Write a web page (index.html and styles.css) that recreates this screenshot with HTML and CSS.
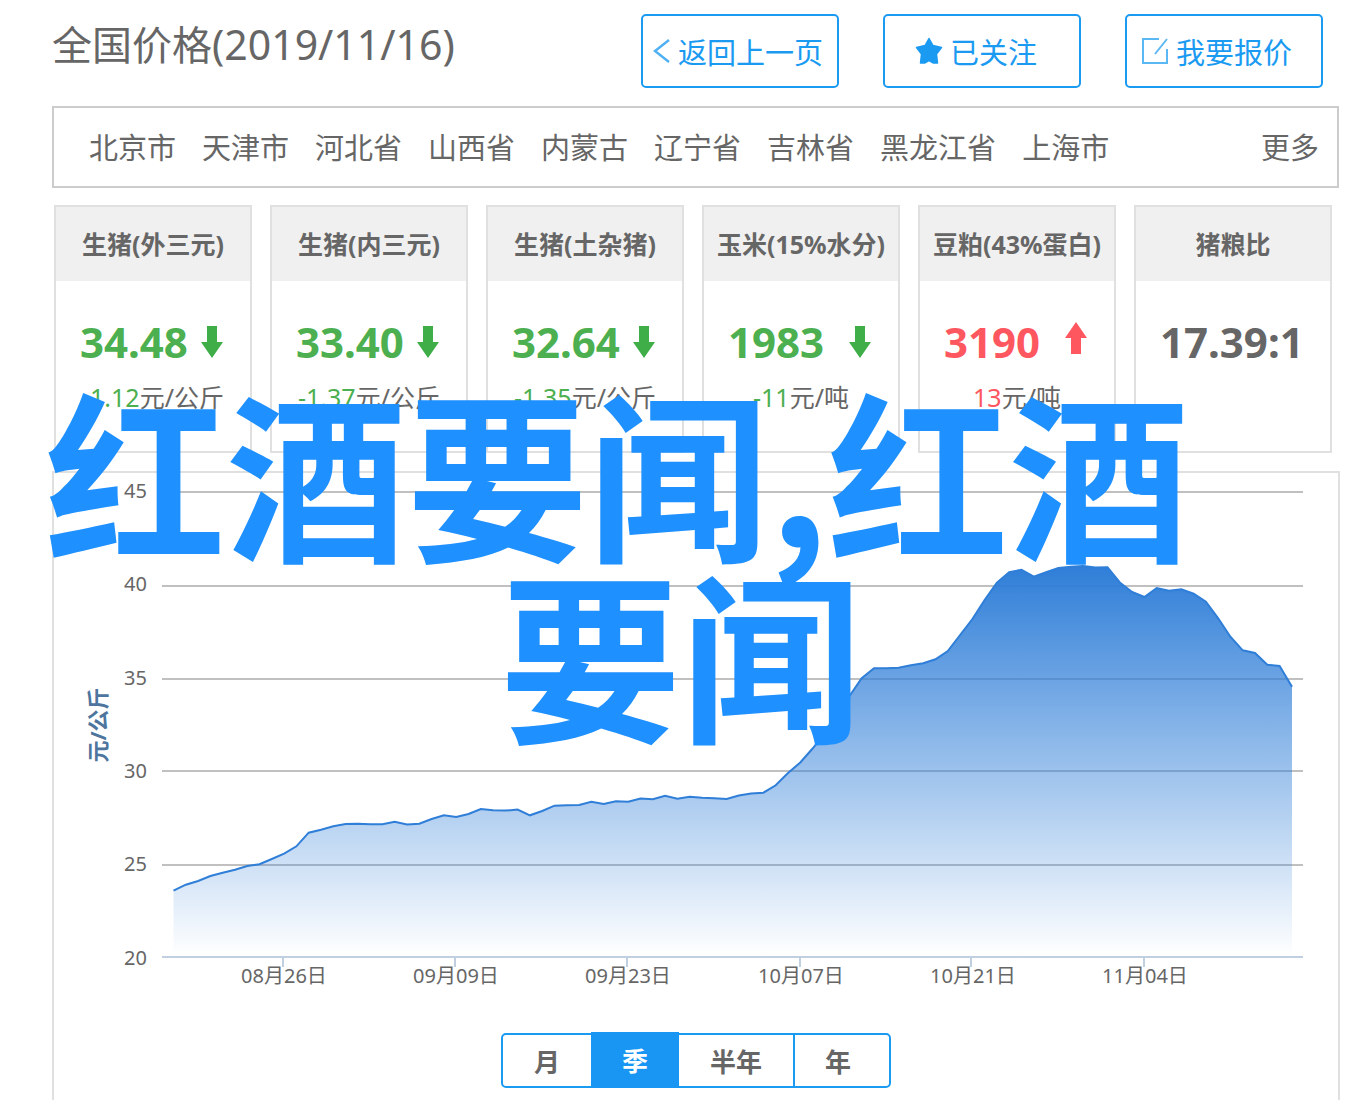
FILE: index.html
```html
<!DOCTYPE html>
<html lang="zh-CN">
<head>
<meta charset="utf-8">
<meta name="viewport" content="width=device-width, initial-scale=1">
<title>全国价格</title>
<link rel="stylesheet" href="styles.css">
</head>
<body>
<main class="page">
  <header class="topbar">
    <h1 class="topbar-title">全国价格<span class="topbar-date">(2019/11/16)</span></h1>
    <div class="actions">
      <button class="action action-back" type="button">
        <svg width="18" height="26" viewBox="0 0 18 26" aria-hidden="true"><path d="M16 2 2 13l14 11" fill="none" stroke="#4fb0f3" stroke-width="2.4"/></svg>
        返回上一页
      </button>
      <button class="action action-follow" type="button">
        <svg width="28" height="28" viewBox="0 0 28 28" aria-hidden="true"><path d="M14 1.500 18 8.500 26.500 10.500 21.500 17 22.500 26H18.500L14 23.500 9.500 26H5.500L6.500 17 1.500 10.500 10 8.500Z" fill="#1b9af2" stroke="#1b9af2" stroke-width="1.500" stroke-linejoin="round"/></svg>
        已关注
      </button>
      <button class="action action-quote" type="button">
        <svg width="28" height="28" viewBox="0 0 28 28" aria-hidden="true"><path d="M18 2H2v24h24V12M26 2 14 17" fill="none" stroke="#5cb7f5" stroke-width="2"/></svg>
        我要报价
      </button>
    </div>
  </header>

  <nav class="regions" aria-label="地区">
    <a href="#">北京市</a>
    <a href="#">天津市</a>
    <a href="#">河北省</a>
    <a href="#">山西省</a>
    <a href="#">内蒙古</a>
    <a href="#">辽宁省</a>
    <a href="#">吉林省</a>
    <a href="#">黑龙江省</a>
    <a href="#">上海市</a>
    <a class="regions-more" href="#">更多</a>
  </nav>

  <section class="cards">
    <article class="card down">
      <h2 class="card-title">生猪(外三元)</h2>
      <div class="card-price"><strong>34.48</strong><svg width="22" height="30" viewBox="0 0 22 30" aria-hidden="true"><path d="M6 0h10v16h6L11 32 0 16h6Z" fill="#3fae49"/></svg></div>
      <p class="card-change"><span>-1.12</span>元/公斤</p>
    </article>
    <article class="card down">
      <h2 class="card-title">生猪(内三元)</h2>
      <div class="card-price"><strong>33.40</strong><svg width="22" height="30" viewBox="0 0 22 30" aria-hidden="true"><path d="M6 0h10v16h6L11 32 0 16h6Z" fill="#3fae49"/></svg></div>
      <p class="card-change"><span>-1.37</span>元/公斤</p>
    </article>
    <article class="card down">
      <h2 class="card-title">生猪(土杂猪)</h2>
      <div class="card-price"><strong>32.64</strong><svg width="22" height="30" viewBox="0 0 22 30" aria-hidden="true"><path d="M6 0h10v16h6L11 32 0 16h6Z" fill="#3fae49"/></svg></div>
      <p class="card-change"><span>-1.35</span>元/公斤</p>
    </article>
    <article class="card down">
      <h2 class="card-title">玉米(15%水分)</h2>
      <div class="card-price"><strong>1983</strong><svg width="22" height="30" viewBox="0 0 22 30" aria-hidden="true"><path d="M6 0h10v16h6L11 32 0 16h6Z" fill="#3fae49"/></svg></div>
      <p class="card-change"><span>-11</span>元/吨</p>
    </article>
    <article class="card up">
      <h2 class="card-title">豆粕(43%蛋白)</h2>
      <div class="card-price"><strong>3190</strong><svg width="22" height="38" viewBox="0 0 22 38" aria-hidden="true"><path d="M11 0 22 16h-6v16H6V16H0Z" fill="#ff575f"/></svg></div>
      <p class="card-change"><span>13</span>元/吨</p>
    </article>
    <article class="card">
      <h2 class="card-title">猪粮比</h2>
      <div class="card-price"><strong>17.39:1</strong></div>
    </article>
  </section>

  <section class="panel">
    <svg class="chart" viewBox="54 473 1284 540" role="img" aria-label="价格走势">
      <defs>
        <linearGradient id="area" gradientUnits="userSpaceOnUse" x1="0" y1="566" x2="0" y2="956">
          <stop offset="0" stop-color="#2f7ed8"/>
          <stop offset="1" stop-color="#2f7ed8" stop-opacity="0"/>
        </linearGradient>
      </defs>
      <path class="grid" d="M162 492H1303M162 586H1303M162 679H1303M162 771H1303M162 865H1303"/>
      <path fill="url(#area)" d="M173.5 956V890.700L185.800 884.700 198.100 881 210.400 876 222.700 872.700 235 869.700 247.200 866 259.500 864.200 271.800 859 284.100 853.700 296.400 846.300 308.700 832.700 321 829.700 333.300 826.300 345.600 824 357.900 823.700 370.100 824.300 382.400 824.200 394.700 821.700 407 824.500 419.300 823.800 431.600 819 443.900 815.300 456.200 817 468.500 814 480.800 809 493 810.200 505.300 810.600 517.600 809.600 529.900 815.300 542.200 811 554.500 805.700 566.800 805.200 579.100 805 591.400 801.700 603.700 804 615.900 801.300 628.200 801.700 640.500 798.500 652.800 799.300 665.100 795.700 677.400 798.700 689.700 796.700 702 797.700 714.300 798.200 726.600 799 738.800 795.500 751.100 793.500 763.400 792.700 775.700 785.300 788 773 800.300 762.500 812.600 748.500 824.900 733 837.200 716 849.500 696 861.700 678.300 874 668.300 886.300 668.300 898.600 667.700 910.900 665.300 923.200 663.200 935.500 659.300 947.800 651 960.100 635 972.400 619 984.600 600 996.900 582.700 1009.200 572.300 1021.500 569.700 1033.800 576.700 1046.100 572.300 1058.400 568 1070.700 566.700 1083 566 1095.300 567.500 1107.500 567.300 1119.800 582.500 1132.100 592 1144.400 597 1156.700 588 1169 590.700 1181.300 589.300 1193.600 593.700 1205.900 601.700 1218.200 618.300 1230.400 636.700 1242.700 650.300 1255 653 1267.300 664.700 1279.600 666 1292 686.700V956Z"/>
      <path class="line" d="M173.5 890.700L185.800 884.700 198.100 881 210.400 876 222.700 872.700 235 869.700 247.200 866 259.500 864.200 271.800 859 284.100 853.700 296.400 846.300 308.700 832.700 321 829.700 333.300 826.300 345.600 824 357.900 823.700 370.100 824.300 382.400 824.200 394.700 821.700 407 824.500 419.300 823.800 431.600 819 443.900 815.300 456.200 817 468.500 814 480.800 809 493 810.200 505.300 810.600 517.600 809.600 529.900 815.300 542.200 811 554.500 805.700 566.800 805.200 579.100 805 591.400 801.700 603.700 804 615.900 801.300 628.200 801.700 640.500 798.500 652.800 799.300 665.100 795.700 677.400 798.700 689.700 796.700 702 797.700 714.300 798.200 726.600 799 738.800 795.500 751.100 793.500 763.400 792.700 775.700 785.300 788 773 800.300 762.500 812.600 748.500 824.900 733 837.200 716 849.500 696 861.700 678.300 874 668.300 886.300 668.300 898.600 667.700 910.900 665.300 923.200 663.200 935.500 659.300 947.800 651 960.100 635 972.400 619 984.600 600 996.900 582.700 1009.200 572.300 1021.500 569.700 1033.800 576.700 1046.100 572.300 1058.400 568 1070.700 566.700 1083 566 1095.300 567.500 1107.500 567.300 1119.800 582.500 1132.100 592 1144.400 597 1156.700 588 1169 590.700 1181.300 589.300 1193.600 593.700 1205.900 601.700 1218.200 618.300 1230.400 636.700 1242.700 650.300 1255 653 1267.300 664.700 1279.600 666 1292 686.700"/>
      <path class="axis" d="M162 957H1303M283 957V967M455 957V967M627 957V967M800 957V967M971 957V967M1144 957V967"/>
      <g class="tick tick-y">
        <text x="147" y="498">45</text>
        <text x="147" y="591">40</text>
        <text x="147" y="685">35</text>
        <text x="147" y="778">30</text>
        <text x="147" y="871">25</text>
        <text x="147" y="965">20</text>
      </g>
      <g class="tick tick-x">
        <text x="284" y="983">08月26日</text>
        <text x="456" y="983">09月09日</text>
        <text x="628" y="983">09月23日</text>
        <text x="801" y="983">10月07日</text>
        <text x="973" y="983">10月21日</text>
        <text x="1145" y="983">11月04日</text>
      </g>
      <text class="axis-title" transform="translate(106 725) rotate(-90)">元/公斤</text>
    </svg>
    <div class="periods">
      <button type="button" class="period">月</button>
      <button type="button" class="period period-active" aria-pressed="true">季</button>
      <button type="button" class="period">半年</button>
      <button type="button" class="period period-last">年</button>
    </div>
  </section>

  <div class="banner">
    <span class="banner-line">红酒要闻,红酒</span>
    <span class="banner-line banner-center">要闻</span>
  </div>
</main>
</body>
</html>
```
FILE: styles.css
```css
* {
  box-sizing: border-box;
}

body {
  margin: 0;
  background: #fff;
  color: #666;
  font-family: "Noto Sans", "Noto Sans CJK SC", sans-serif;
}

h1,
h2,
p {
  margin: 0;
}

button {
  font: inherit;
  color: inherit;
  cursor: pointer;
}

.page {
  position: relative;
  display: flex;
  flex-direction: column;
  min-height: 100vh;
  padding: 14px 20px 0 52px;
}

/* Title and actions */
.topbar {
  display: flex;
  justify-content: space-between;
  align-items: flex-start;
  margin-right: 17px;
}

.topbar-title {
  font-size: 40px;
  font-weight: 400;
  line-height: 60px;
  white-space: nowrap;
}

.topbar-date {
  font-size: 41px;
}

.actions {
  display: flex;
  gap: 44px;
}

.action {
  display: flex;
  align-items: center;
  gap: 7px;
  width: 198px;
  height: 74px;
  padding: 0;
  border: 2px solid #1b9af2;
  border-radius: 5px;
  background: #fff;
  color: #1b9af2;
  font-size: 29px;
  white-space: nowrap;
}

.action-back {
  padding-left: 10px;
}

.action-follow {
  padding-left: 30px;
}

.action-quote {
  padding-left: 14px;
}

/* Region links */
.regions {
  display: flex;
  align-items: center;
  gap: 26px;
  height: 82px;
  margin: 18px 1px 0 0;
  padding: 0 18px 2px 35px;
  border: 2px solid #ccc;
  font-size: 29px;
  white-space: nowrap;
}

.regions a {
  color: inherit;
  text-decoration: none;
}

.regions .regions-more {
  margin-left: auto;
}

/* Price cards */
.cards {
  display: grid;
  grid-template-columns: repeat(6, 1fr);
  gap: 18px;
  margin: 17px 8px 0 2px;
}

.card {
  min-width: 0;
  height: 248px;
  border: 2px solid #e0e0e0;
  white-space: nowrap;
}

.card-title {
  background: #f0f0f0;
  font-size: 25px;
  font-weight: 700;
  line-height: 74px;
  text-align: center;
}

.card-price {
  display: flex;
  justify-content: space-between;
  align-items: center;
  height: 84px;
  margin-top: 18px;
  padding: 0 27px 0 24px;
  font-size: 42px;
}

.card-price svg {
  overflow: visible;
}

.card-change {
  font-size: 25px;
  line-height: 28px;
  text-align: center;
}

.down strong,
.down span {
  color: #4caf50;
}

.up strong,
.up span {
  color: #ff575f;
}

/* Trend chart */
.panel {
  flex: 1;
  margin-top: 18px;
  padding-bottom: 12px;
  border: 2px solid #e0e0e0;
  border-bottom: 0;
}

.chart {
  display: block;
  width: 100%;
  height: auto;
}

.grid {
  fill: none;
  stroke: #c0c0c0;
  stroke-width: 2;
}

.axis {
  fill: none;
  stroke: #c0d0e0;
  stroke-width: 2;
}

.line {
  fill: none;
  stroke: #2f7ed8;
  stroke-width: 2;
}

.tick {
  fill: #666;
  font-size: 20px;
}

.tick-y {
  text-anchor: end;
}

.tick-x {
  text-anchor: middle;
}

.axis-title {
  fill: #4d759e;
  font-size: 22px;
  font-weight: 700;
  text-anchor: middle;
}

.periods {
  display: flex;
  width: max-content;
  height: 55px;
  margin: 20px auto 0;
  border: 2px solid #1b9af2;
  border-radius: 5px;
}

.period {
  padding: 0 31px;
  border: 0;
  background: none;
  font-size: 26px;
  font-weight: 700;
}

.period-active {
  margin: -3px 0 -2px;
  background: #1996f3;
  color: #fff;
}

.period-last {
  padding: 0 38px 0 30px;
  border-left: 2px solid #1b9af2;
}

/* Headline laid over the page */
.banner {
  position: absolute;
  inset: 379px 43px auto 45px;
  color: #1e90ff;
  font-family: "Noto Sans CJK SC", sans-serif;
  font-size: 181px;
  font-weight: 700;
  line-height: 181px;
  white-space: nowrap;
  pointer-events: none;
}

.banner-line {
  display: block;
}

.banner-center {
  text-align: center;
}
```
